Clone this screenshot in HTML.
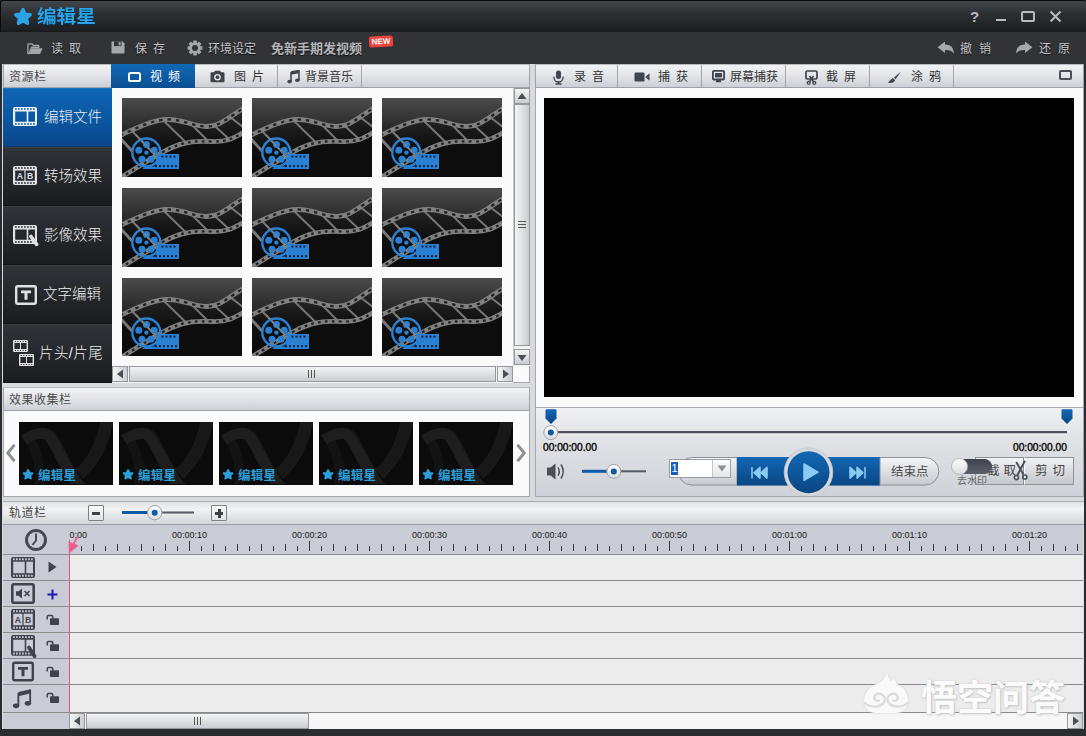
<!DOCTYPE html>
<html lang="zh-CN">
<head>
<meta charset="utf-8">
<title>编辑星</title>
<style>
*{box-sizing:border-box;margin:0;padding:0}
html,body{width:1086px;height:736px;overflow:hidden;background:#2b2d31}
body{font-family:"Liberation Sans","Noto Sans CJK SC",sans-serif;font-size:12px;color:#333;position:relative}
.abs{position:absolute}
i{font-style:normal}
#win{position:absolute;left:0;top:0;width:1086px;height:736px;background:#2a2c30;overflow:hidden}
#body{position:absolute;left:2px;top:64px;width:1082px;height:664.5px;background:#d9dadd}
#title{position:absolute;left:0;top:0;width:1086px;height:32px;background:linear-gradient(#43464b,#2e3034 40%,#1d1e21);border-bottom:1px solid #17181a;border-top:1px solid #0a0a0b;border-left:1px solid #0a0a0b;border-radius:3px 3px 0 0}
#title .name{position:absolute;left:36px;top:3px;font-size:18.5px;font-weight:bold;color:#2ba3e4;line-height:26px;transform:scaleX(1.06);transform-origin:0 0;text-shadow:0 1px 1px #0a2a4a}
#toolbar{position:absolute;left:0;top:32px;width:1086px;height:32px;background:#313337}
.tb{position:absolute;top:1px;height:32px;line-height:32px;color:#c4c6c9;font-size:12px;white-space:nowrap;text-shadow:0 1px 1px #111}
.panelhead{position:absolute;height:24px;background:linear-gradient(#f1f2f4,#e5e7ea 40%,#cdd0d6);border:1px solid #9fa2a8;border-top-color:#b8babf;font-size:12px;line-height:25px;color:#4a4a4a}
.tab{position:absolute;top:0;height:22px;line-height:25px;font-size:12px;color:#333;border-right:1px solid #a2a5ab;white-space:nowrap}
.tab.on{background:linear-gradient(#1168b6,#0b4f92);color:#fff;border-right:none;top:-1px;height:24px;line-height:27px}
.tab svg{position:absolute}
#side{position:absolute;left:3px;top:88px;width:108.5px;height:295px;background:#1b1c1f}
.si{position:absolute;left:0;width:108.5px;height:59px;background:linear-gradient(#303338,#25272b 50%,#1b1c1f);border-top:1px solid #3a3d42;border-bottom:1px solid #121315;color:#eceef0;font-size:14.5px;font-weight:300;line-height:57px;white-space:nowrap}
.si.on{background:linear-gradient(#0d65b4,#0b56a0 55%,#09468a);border-top-color:#1672c2;border-bottom-color:#083a70}
.si span{position:absolute;top:0}
.si svg{position:absolute}
.thumb{position:absolute;width:120px;height:79px}
.eth{position:absolute;width:94px;height:63px;top:11px;background:#0b0b0b;overflow:hidden}
.eth b{position:absolute;left:19px;top:46px;font-size:12.5px;color:#2a9fd8;font-weight:bold;line-height:16px;white-space:nowrap;letter-spacing:0.3px}
.eth svg{position:absolute;left:0;top:0}
.sbtn{position:absolute;width:16px;height:16px;background:linear-gradient(#f3f4f5,#dfe1e4 50%,#c9ccd1);border:1px solid #96989e}
.sbtnh{background:linear-gradient(90deg,#f3f4f5,#dfe1e4 50%,#c9ccd1)}
.track{position:absolute;left:3px;width:1080px;height:26px;background:#ececec;border-bottom:1px solid #8a8a8a}
.track u{position:absolute;left:0;top:0;width:66px;height:25px;background:#c9ccd4;text-decoration:none}
#ruler{position:absolute;left:3px;top:525px;width:1080px;height:30px;background:#c9ccd4;border-bottom:1px solid #8a8d94;overflow:hidden}
#ruler i{position:absolute;bottom:3px;width:1px;background:#33363c;margin-left:-3px}
#ruler span{position:absolute;top:4px;width:60px;text-align:center;font-size:9px;line-height:12px;color:#1a1a1a;margin-left:-3px}
.tm{position:absolute;font-size:10.2px;line-height:12px;color:#111;-webkit-text-stroke:0.5px #111;text-shadow:0 0 1px #fff,0 0 1px #fff,0 0 1px #fff;letter-spacing:0}
.btn2{position:absolute;top:457px;height:28px;border:1px solid #8d9097;background:linear-gradient(#f2f3f5,#d9dbe0 50%,#c4c7cd);font-size:12.5px;line-height:26px;color:#444;white-space:nowrap}
</style>
</head>
<body>
<svg width="0" height="0" style="position:absolute">
  <defs>
    <linearGradient id="tg" x1="0" y1="0" x2="0" y2="1">
      <stop offset="0" stop-color="#4b4b4b"/><stop offset="0.35" stop-color="#2c2c2c"/><stop offset="0.6" stop-color="#181818"/><stop offset="1" stop-color="#0c0c0c"/>
    </linearGradient>
    <linearGradient id="fg" x1="0" y1="0" x2="1" y2="1">
      <stop offset="0" stop-color="#000" stop-opacity="0.18"/><stop offset="1" stop-color="#000" stop-opacity="0.55"/>
    </linearGradient>
    <symbol id="thumb" viewBox="0 0 120 79">
      <rect width="120" height="79" fill="url(#tg)"/>
      <!-- below film: dark -->
      <path d="M-2 80 C 15 70, 35 56, 50 49.5 S 75 43, 90 43.5 S 112 40, 122 34 L122 80 Z" fill="#0d0d0d"/>
      <!-- film frames -->
      <path d="M-2 37.5 C 15 30, 30 22, 45 21.5 S 70 28, 84 28.5 S 108 18, 122 10 L122 34 C 112 40, 100 44, 90 43.5 S 65 43, 50 49.5 S 15 70, -2 80 Z" fill="url(#fg)"/>
      <!-- dividers -->
      <g stroke="#787878" stroke-width="1.9" fill="none">
        <path d="M10 33 L37 61"/><path d="M42.5 23.5 L63.5 44"/><path d="M70 27 L86 43"/><path d="M92.8 28 L107.5 41.5"/><path d="M108 19 L121 29"/><path d="M-1 41 L10 53" stroke-width="3"/>
      </g>
      <!-- bands -->
      <g fill="none" stroke="#808080" stroke-width="4.8">
        <path d="M-2 37.5 C 15 30, 30 22, 45 21.5 S 70 28, 84 28.5 S 108 18, 122 10"/>
        <path d="M-2 80 C 15 70, 35 56, 50 49.5 S 75 43, 90 43.5 S 112 40, 122 34"/>
      </g>
      <g fill="none" stroke="#222" stroke-width="2.2" stroke-dasharray="2.8 4.2">
        <path d="M-2 37.5 C 15 30, 30 22, 45 21.5 S 70 28, 84 28.5 S 108 18, 122 10" stroke-dasharray="3.4 5"/>
        <path d="M-2 80 C 15 70, 35 56, 50 49.5 S 75 43, 90 43.5 S 112 40, 122 34"/>
      </g>
      <!-- blue reel -->
      <g fill="#2a80d2">
        <circle cx="24.3" cy="54.5" r="14" fill="none" stroke="#2a80d2" stroke-width="2.4"/>
        <circle cx="24.5" cy="46.6" r="3.5"/><circle cx="16.8" cy="52.2" r="3.5"/><circle cx="32.2" cy="52.2" r="3.5"/><circle cx="20" cy="61.2" r="3.5"/><circle cx="29" cy="61.2" r="3.5"/><circle cx="24.4" cy="54.6" r="2.2"/>
        <path d="M34 56 H57 V71 H20 L24 68.5 H34 Z"/>
      </g>
      <g fill="#0a1a3a">
        <rect x="39.5" y="57.6" width="1.9" height="1.9"/><rect x="43.5" y="57.6" width="1.9" height="1.9"/><rect x="47.5" y="57.6" width="1.9" height="1.9"/><rect x="51.5" y="57.6" width="1.9" height="1.9"/>
        <rect x="33" y="67.2" width="1.9" height="1.9"/><rect x="37" y="67.2" width="1.9" height="1.9"/><rect x="41" y="67.2" width="1.9" height="1.9"/><rect x="45" y="67.2" width="1.9" height="1.9"/><rect x="49" y="67.2" width="1.9" height="1.9"/><rect x="53" y="67.2" width="1.9" height="1.9"/>
      </g>
      <!-- divider over reel -->
      <path d="M14 37 L35 59" stroke="#8a8a8a" stroke-width="1.8" stroke-opacity="0.75" stroke-dasharray="2.6 1.6"/>
    </symbol>
    <symbol id="eth" viewBox="0 0 94 62">
      <g fill="none" stroke="#1e1e1e" stroke-width="11" stroke-linecap="butt">
        <path d="M5 18 C 18 10, 26 10, 30 14 C 40 26, 48 52, 62 66" />
        <path d="M88 -4 C 84 20, 76 38, 60 52" stroke="#181818" stroke-width="12"/>
        <path d="M12 20 C 20 34, 22 50, 20 66" stroke="#131313" stroke-width="10"/>
      </g>
      <g fill="none" stroke="#343434" stroke-width="0.8" stroke-dasharray="1 1.2">
        <path d="M34 8.5 C 46 24, 52 48, 68 64" /><path d="M94 -2 C 90 20, 82 40, 64 56"/>
      </g>
      <g transform="translate(3.1,46.6) scale(0.6)"><path d="M10 2.6 L12.1 7.3 L17.2 7.8 L13.4 11.3 L14.5 16.3 L10 13.7 L5.5 16.3 L6.6 11.3 L2.8 7.8 L7.9 7.3 Z" fill="#2a9fd8" stroke="#2a9fd8" stroke-width="3.4" stroke-linejoin="round"/></g>
    </symbol>
    <!-- film icon 24x19 -->
    <symbol id="film" viewBox="0 0 24 19"><path fill-rule="evenodd" fill="currentColor" d="M2 0 H22 Q24 0 24 2 V17 Q24 19 22 19 H2 Q0 19 0 17 V2 Q0 0 2 0 ZM2.05 1.15 h1.70 v1.70 h-1.70 ZM2.05 16.15 h1.70 v1.70 h-1.70 ZM5.05 1.15 h1.70 v1.70 h-1.70 ZM5.05 16.15 h1.70 v1.70 h-1.70 ZM8.05 1.15 h1.70 v1.70 h-1.70 ZM8.05 16.15 h1.70 v1.70 h-1.70 ZM11.05 1.15 h1.70 v1.70 h-1.70 ZM11.05 16.15 h1.70 v1.70 h-1.70 ZM14.05 1.15 h1.70 v1.70 h-1.70 ZM14.05 16.15 h1.70 v1.70 h-1.70 ZM17.05 1.15 h1.70 v1.70 h-1.70 ZM17.05 16.15 h1.70 v1.70 h-1.70 ZM20.05 1.15 h1.70 v1.70 h-1.70 ZM20.05 16.15 h1.70 v1.70 h-1.70 ZM2.20 4.40 h11.50 v10.40 h-11.50 ZM15.30 4.40 h6.70 v10.40 h-6.70 Z"/></symbol>
    <symbol id="filmab" viewBox="0 0 24 19"><path fill-rule="evenodd" fill="currentColor" d="M2 0 H22 Q24 0 24 2 V17 Q24 19 22 19 H2 Q0 19 0 17 V2 Q0 0 2 0 ZM2.05 1.15 h1.70 v1.70 h-1.70 ZM2.05 16.15 h1.70 v1.70 h-1.70 ZM5.05 1.15 h1.70 v1.70 h-1.70 ZM5.05 16.15 h1.70 v1.70 h-1.70 ZM8.05 1.15 h1.70 v1.70 h-1.70 ZM8.05 16.15 h1.70 v1.70 h-1.70 ZM11.05 1.15 h1.70 v1.70 h-1.70 ZM11.05 16.15 h1.70 v1.70 h-1.70 ZM14.05 1.15 h1.70 v1.70 h-1.70 ZM14.05 16.15 h1.70 v1.70 h-1.70 ZM17.05 1.15 h1.70 v1.70 h-1.70 ZM17.05 16.15 h1.70 v1.70 h-1.70 ZM20.05 1.15 h1.70 v1.70 h-1.70 ZM20.05 16.15 h1.70 v1.70 h-1.70 ZM2.20 4.40 h9.20 v10.40 h-9.20 ZM12.60 4.40 h9.20 v10.40 h-9.20 Z"/><text x="6.8" y="12.9" font-family="Liberation Sans, sans-serif" font-size="8.6" font-weight="bold" fill="currentColor" text-anchor="middle">A</text><text x="17.2" y="12.9" font-family="Liberation Sans, sans-serif" font-size="8.6" font-weight="bold" fill="currentColor" text-anchor="middle">B</text></symbol>
    <symbol id="filmfx" viewBox="0 0 26 22"><path fill-rule="evenodd" fill="currentColor" d="M2 0 H22 Q24 0 24 2 V17 Q24 19 22 19 H2 Q0 19 0 17 V2 Q0 0 2 0 ZM2.05 1.15 h1.70 v1.70 h-1.70 ZM2.05 16.15 h1.70 v1.70 h-1.70 ZM5.05 1.15 h1.70 v1.70 h-1.70 ZM5.05 16.15 h1.70 v1.70 h-1.70 ZM8.05 1.15 h1.70 v1.70 h-1.70 ZM8.05 16.15 h1.70 v1.70 h-1.70 ZM11.05 1.15 h1.70 v1.70 h-1.70 ZM11.05 16.15 h1.70 v1.70 h-1.70 ZM14.05 1.15 h1.70 v1.70 h-1.70 ZM14.05 16.15 h1.70 v1.70 h-1.70 ZM17.05 1.15 h1.70 v1.70 h-1.70 ZM17.05 16.15 h1.70 v1.70 h-1.70 ZM20.05 1.15 h1.70 v1.70 h-1.70 ZM20.05 16.15 h1.70 v1.70 h-1.70 ZM2.20 4.40 h11.50 v10.40 h-11.50 ZM15.30 4.40 h6.70 v10.40 h-6.70 Z"/><path d="M18 11.5 L23.6 19.4" stroke="currentColor" stroke-width="3.6" stroke-linecap="round"/></symbol>
    <symbol id="ticon" viewBox="0 0 22 20">
      <rect x="1.2" y="1.2" width="19.6" height="17.6" rx="1.5" fill="none" stroke="currentColor" stroke-width="2.4"/>
      <path d="M6 5.5 H16 V8.3 H12.5 V14.8 H9.5 V8.3 H6 Z" fill="currentColor"/>
    </symbol>
    <symbol id="fsm" viewBox="0 0 15 12"><path fill-rule="evenodd" fill="currentColor" d="M1 0 H14 Q15 0 15 1 V11 Q15 12 14 12 H1 Q0 12 0 11 V1 Q0 0 1 0 ZM1.75 0.90 h1.10 v1.10 h-1.10 ZM1.75 10.00 h1.10 v1.10 h-1.10 ZM4.35 0.90 h1.10 v1.10 h-1.10 ZM4.35 10.00 h1.10 v1.10 h-1.10 ZM6.95 0.90 h1.10 v1.10 h-1.10 ZM6.95 10.00 h1.10 v1.10 h-1.10 ZM9.55 0.90 h1.10 v1.10 h-1.10 ZM9.55 10.00 h1.10 v1.10 h-1.10 ZM12.15 0.90 h1.10 v1.10 h-1.10 ZM12.15 10.00 h1.10 v1.10 h-1.10 ZM1.40 3.10 h5.60 v5.80 h-5.60 ZM8.00 3.10 h5.60 v5.80 h-5.60 Z"/></symbol>
    <symbol id="lock" viewBox="0 0 14 14">
      <rect x="4" y="5.2" width="9" height="6.8" rx="0.8" fill="currentColor"/>
      <path d="M1.2 6.4 V3.8 Q1.2 2.4 2.6 2.4 H5.4 Q6.8 2.4 6.8 3.8 V5.4" fill="none" stroke="currentColor" stroke-width="1.5"/>
    </symbol>
  </defs>
</svg>
<div id="win">
  <div id="title">
    <svg class="abs" style="left:12px;top:6px" width="20" height="19" viewBox="0 0 20 19"><path d="M10 2.6 L12.1 7.3 L17.2 7.8 L13.4 11.3 L14.5 16.3 L10 13.7 L5.5 16.3 L6.6 11.3 L2.8 7.8 L7.9 7.3 Z" fill="#2ba3e4" stroke="#2ba3e4" stroke-width="3.4" stroke-linejoin="round"/></svg>
    <div class="name">编辑星</div>
    <div class="abs" style="left:969px;top:7px;font-size:15px;line-height:18px;color:#b9bbbf;font-weight:bold">?</div>
    <div class="abs" style="left:995px;top:18px;width:10px;height:2px;background:#b9bbbf"></div>
    <div class="abs" style="left:1020px;top:10px;width:14px;height:11px;border:2px solid #b9bbbf;border-radius:2px"></div>
    <svg class="abs" style="left:1048px;top:9px" width="13" height="13" viewBox="0 0 13 13"><path d="M1.5 1.5 L11.5 11.5 M11.5 1.5 L1.5 11.5" stroke="#b9bbbf" stroke-width="2"/></svg>
  </div>
  <div id="toolbar">
    <svg class="abs" style="left:27px;top:10.5px" width="16.5" height="12" viewBox="0 0 18 13"><path d="M1 11.5 V2 Q1 1 2 1 H5.5 L7 2.6 H12 Q13 2.6 13 3.6 V4.6 H5 L2.4 11.5 Z" fill="none" stroke="#a4a7ab" stroke-width="1.4" stroke-linejoin="round"/><path d="M5.2 5.6 H17 L14.2 12 H2.6 Z" fill="#a4a7ab"/></svg>
    <div class="tb" style="left:51px;letter-spacing:6px">读取</div>
    <svg class="abs" style="left:111px;top:9px" width="14" height="13" viewBox="0 0 14 13"><path d="M1 0.5 H11.5 L13.5 2.5 V11.5 Q13.5 12.5 12.5 12.5 H1.5 Q0.5 12.5 0.5 11.5 V1 Q0.5 0.5 1 0.5 Z" fill="#a4a7ab"/><rect x="3" y="0.5" width="7.5" height="4.6" fill="#2f3136"/><rect x="7.6" y="1.2" width="2" height="3.2" fill="#a4a7ab"/></svg>
    <div class="tb" style="left:135px;letter-spacing:6px">保存</div>
    <svg class="abs" style="left:187px;top:8px" width="16" height="16" viewBox="-8 -8 16 16"><g fill="#a4a7ab"><circle r="5.7"/><g id="gt"><rect x="-1.8" y="-7.4" width="3.6" height="14.8" rx="0.6"/></g><use href="#gt" transform="rotate(45)"/><use href="#gt" transform="rotate(90)"/><use href="#gt" transform="rotate(135)"/></g><circle r="3" fill="#313337"/></svg>
    <div class="tb" style="left:208px">环境设定</div>
    <div class="tb" style="left:271px;font-weight:bold;font-size:13px;color:#b4b6b9">免新手期发视频</div>
    <div class="abs" style="left:369px;top:4px;width:24px;height:11px;background:#e8443c;border-radius:2px;color:#fff;font-size:8px;font-weight:bold;line-height:11px;text-align:center;transform:rotate(-3deg)">NEW</div>
    <svg class="abs" style="left:937px;top:9px" width="18" height="14" viewBox="0 0 18 14"><path d="M0.6 6.2 L8 0.4 V3.4 C13.5 3.4 16.8 6.6 16.8 12.4 C15 9.8 12.5 8.8 8 8.9 V12 Z" fill="#a4a7ab"/></svg>
    <div class="tb" style="left:960px;letter-spacing:7px">撤销</div>
    <svg class="abs" style="left:1015px;top:9px" width="18" height="14" viewBox="0 0 18 14"><path d="M17.4 6.2 L10 0.4 V3.4 C4.5 3.4 1.2 6.6 1.2 12.4 C3 9.8 5.5 8.8 10 8.9 V12 Z" fill="#a4a7ab"/></svg>
    <div class="tb" style="left:1039px;letter-spacing:7px">还原</div>
  </div>
  <div id="body"></div>

  <!-- left panel -->
  <div class="abs" style="left:3px;top:64px;width:527px;height:319px;background:#fafafa;border:1px solid #a4a7ad"></div>
  <div class="panelhead" style="left:3px;top:64px;width:527px;padding-left:5px"><span style="letter-spacing:0.5px">资源栏</span>
    <div class="tab on" style="left:107px;width:84px"><svg style="left:17px;top:8px" width="13" height="10" viewBox="0 0 13 10"><rect x="1" y="1" width="11" height="8" rx="1.6" fill="none" stroke="#fff" stroke-width="2"/></svg><span class="abs" style="left:39px;letter-spacing:6px">视频</span></div>
    <div class="tab" style="left:191px;width:83px"><svg style="left:15px;top:5px" width="15" height="13" viewBox="0 0 15 13"><path d="M0.5 3.3 Q0.5 2.3 1.5 2.3 H4 L5 0.7 H10 L11 2.3 H13.5 Q14.5 2.3 14.5 3.3 V11.3 Q14.5 12.3 13.5 12.3 H1.5 Q0.5 12.3 0.5 11.3 Z" fill="#40444c"/><circle cx="7.5" cy="7.2" r="3.3" fill="#e6e8eb"/><circle cx="7.5" cy="7.2" r="1.9" fill="#40444c"/></svg><span class="abs" style="left:39px;letter-spacing:6px">图片</span></div>
    <div class="tab" style="left:274px;width:84px"><svg style="left:9px;top:5px" width="13" height="14" viewBox="0 0 13 14"><path d="M4 2 L12 0.5 V10" fill="none" stroke="#40444c" stroke-width="1.6"/><path d="M4 2 V11.5" stroke="#40444c" stroke-width="1.6"/><path d="M4 2 L12 0.5 V3.2 L4 4.7 Z" fill="#40444c"/><ellipse cx="2.6" cy="11.6" rx="2.3" ry="1.8" fill="#40444c"/><ellipse cx="10.4" cy="10.2" rx="2.3" ry="1.8" fill="#40444c"/></svg><span class="abs" style="left:27px">背景音乐</span></div>
  </div>
  <div id="side">
    <div class="si on" style="top:0"><svg style="left:10px;top:18px;color:#e9f1f9" width="24" height="19"><use href="#film"/></svg><span style="left:41px">编辑文件</span></div>
    <div class="si" style="top:59px"><svg style="left:10px;top:18px;color:#dfe1e4" width="24" height="19"><use href="#filmab"/></svg><span style="left:41px">转场效果</span></div>
    <div class="si" style="top:118px"><svg style="left:10px;top:18px;color:#dfe1e4" width="26" height="22"><use href="#filmfx"/></svg><span style="left:41px">影像效果</span></div>
    <div class="si" style="top:177px"><svg style="left:12px;top:19px;color:#dfe1e4" width="22" height="20"><use href="#ticon"/></svg><span style="left:40px">文字编辑</span></div>
    <div class="si" style="top:236px"><svg style="left:10px;top:15px;color:#dfe1e4" width="15" height="12"><use href="#fsm"/></svg><svg style="left:16px;top:29px;color:#dfe1e4" width="15" height="12"><use href="#fsm"/></svg><span style="left:36px;letter-spacing:0.4px">片头/片尾</span></div>
  </div>
  <!-- thumbs -->
  <svg class="thumb" style="left:122px;top:98px"><use href="#thumb"/></svg>
  <svg class="thumb" style="left:252px;top:98px"><use href="#thumb"/></svg>
  <svg class="thumb" style="left:382px;top:98px"><use href="#thumb"/></svg>
  <svg class="thumb" style="left:122px;top:188px"><use href="#thumb"/></svg>
  <svg class="thumb" style="left:252px;top:188px"><use href="#thumb"/></svg>
  <svg class="thumb" style="left:382px;top:188px"><use href="#thumb"/></svg>
  <div class="abs" style="left:122px;top:278px;width:120px;height:77.7px;overflow:hidden"><svg class="thumb" style="left:0;top:0"><use href="#thumb"/></svg></div>
  <div class="abs" style="left:252px;top:278px;width:120px;height:77.7px;overflow:hidden"><svg class="thumb" style="left:0;top:0"><use href="#thumb"/></svg></div>
  <div class="abs" style="left:382px;top:278px;width:120px;height:77.7px;overflow:hidden"><svg class="thumb" style="left:0;top:0"><use href="#thumb"/></svg></div>
  <!-- v scrollbar -->
  <div class="abs" style="left:513px;top:88px;width:17px;height:278px;background:#f4f4f5;border-left:1px solid #c8cacd"></div>
  <div class="sbtn" style="left:514px;top:88px"><svg class="abs" style="left:2px;top:3px" width="10" height="8" viewBox="0 0 10 8"><path d="M5 1 L9.5 7 H0.5 Z" fill="#4a4e57"/></svg></div>
  <div class="sbtn sbtnh" style="left:514px;top:104px;height:242px"><div class="abs" style="left:3px;top:116px;width:8px;height:7px;border-top:1px solid #555;border-bottom:1px solid #555"><div class="abs" style="left:0;top:2px;width:8px;height:1px;background:#555"></div></div></div>
  <div class="sbtn" style="left:514px;top:349px"><svg class="abs" style="left:2px;top:4px" width="10" height="8" viewBox="0 0 10 8"><path d="M5 7 L9.5 1 H0.5 Z" fill="#4a4e57"/></svg></div>
  <!-- h scrollbar -->
  <div class="abs" style="left:112px;top:366px;width:401px;height:17px;background:#f4f4f5;border-top:1px solid #c8cacd"></div>
  <div class="sbtn sbtnh" style="left:112px;top:366px"><svg class="abs" style="left:3px;top:2px" width="8" height="10" viewBox="0 0 8 10"><path d="M1 5 L7 0.5 V9.5 Z" fill="#4a4e57"/></svg></div>
  <div class="sbtn" style="left:129px;top:366px;width:367px"><div class="abs" style="left:178px;top:3px;width:7px;height:8px;border-left:1px solid #555;border-right:1px solid #555"><div class="abs" style="left:2px;top:0;width:1px;height:8px;background:#555"></div></div></div>
  <div class="sbtn sbtnh" style="left:497px;top:366px"><svg class="abs" style="left:4px;top:2px" width="8" height="10" viewBox="0 0 8 10"><path d="M7 5 L1 0.5 V9.5 Z" fill="#4a4e57"/></svg></div>

  <!-- effects panel -->
  <div class="abs" style="left:3px;top:387px;width:527px;height:110px;background:#fafafa;border:1px solid #a4a7ad"></div>
  <div class="panelhead" style="left:3px;top:387px;width:527px;padding-left:5px"><span style="letter-spacing:0.5px">效果收集栏</span></div>
  <div class="abs" id="eff" style="left:3px;top:411px;width:527px;height:85px">
    <svg class="abs" style="left:2px;top:33px" width="12" height="18" viewBox="0 0 12 18"><path d="M9.5 0.8 L2.8 9 L9.5 17.2" fill="none" stroke="#8e9197" stroke-width="3"/></svg>
    <div class="eth" style="left:16px"><svg width="94" height="62"><use href="#eth"/></svg><b>编辑星</b></div>
    <div class="eth" style="left:116px"><svg width="94" height="62"><use href="#eth"/></svg><b>编辑星</b></div>
    <div class="eth" style="left:216px"><svg width="94" height="62"><use href="#eth"/></svg><b>编辑星</b></div>
    <div class="eth" style="left:316px"><svg width="94" height="62"><use href="#eth"/></svg><b>编辑星</b></div>
    <div class="eth" style="left:416px"><svg width="94" height="62"><use href="#eth"/></svg><b>编辑星</b></div>
    <svg class="abs" style="left:512px;top:33px" width="12" height="18" viewBox="0 0 12 18"><path d="M2.5 0.8 L9.2 9 L2.5 17.2" fill="none" stroke="#8e9197" stroke-width="3"/></svg>
  </div>

  <!-- right panel -->
  <div class="abs" style="left:535px;top:64px;width:549px;height:433px;background:#fafafa;border:1px solid #a4a7ad"></div>
  <div class="abs" style="left:536px;top:407px;width:547px;height:89px;background:linear-gradient(#eff0f2,#dfe1e5 40%,#cfd2d8);border-top:1px solid #a9acb2"></div>
  <div class="panelhead" style="left:535px;top:64px;width:549px">
    <div class="tab" style="left:-1px;width:83px"><svg style="left:18px;top:5px" width="11" height="15" viewBox="0 0 11 15"><rect x="3" y="0.5" width="5" height="8.5" rx="2.5" fill="#40444c"/><path d="M1 6.5 V7.5 A4.5 4.5 0 0 0 10 7.5 V6.5 M5.5 12 V14 M2.5 14 H8.5" fill="none" stroke="#40444c" stroke-width="1.3"/></svg><span class="abs" style="left:39px;letter-spacing:6px">录音</span></div>
    <div class="tab" style="left:82px;width:84px"><svg style="left:16px;top:7px" width="16" height="10" viewBox="0 0 16 10"><rect x="0.5" y="0.5" width="10" height="9" rx="1.2" fill="#40444c"/><path d="M11.3 5 L15.5 1.2 V8.8 Z" fill="#40444c"/></svg><span class="abs" style="left:40px;letter-spacing:6px">捕获</span></div>
    <div class="tab" style="left:166px;width:84px"><svg style="left:10px;top:5px" width="13" height="13" viewBox="0 0 13 13"><rect x="0.9" y="0.9" width="11.2" height="8.6" rx="1" fill="none" stroke="#40444c" stroke-width="1.8"/><rect x="3" y="3" width="7" height="4.4" fill="#40444c"/><path d="M4.8 9.5 H8.2 L9.4 12.2 H3.6 Z" fill="#40444c"/></svg><span class="abs" style="left:28px">屏幕捕获</span></div>
    <div class="tab" style="left:250px;width:84px"><svg style="left:19px;top:5px" width="14" height="15" viewBox="0 0 14 15"><rect x="1" y="1" width="11" height="8" rx="1.3" fill="none" stroke="#40444c" stroke-width="1.7"/><path d="M4.5 6 L9 12.5 M8.5 6 L4 12.5" stroke="#40444c" stroke-width="1.4"/><circle cx="3.7" cy="12.8" r="1.5" fill="none" stroke="#40444c" stroke-width="1.2"/><circle cx="9.3" cy="12.8" r="1.5" fill="none" stroke="#40444c" stroke-width="1.2"/></svg><span class="abs" style="left:40px;letter-spacing:6px">截屏</span></div>
    <div class="tab" style="left:334px;width:84px"><svg style="left:17px;top:6px" width="15" height="13" viewBox="0 0 15 13"><path d="M14 0.5 L7 6.5 L8.6 8.2 Z" fill="#40444c"/><path d="M6.2 7.2 C4 7.2 3.6 9.5 0.8 11.6 C4 12.6 8 11.5 8 9 Z" fill="#40444c"/></svg><span class="abs" style="left:41px;letter-spacing:6px">涂鸦</span></div>
    <div class="abs" style="left:523px;top:5px;width:13px;height:10px;border:2px solid #4a4e57;border-radius:2px"></div>
  </div>
  <div class="abs" style="left:544px;top:98px;width:530px;height:299px;background:#000"></div>

  <!-- player controls -->
  <svg class="abs" style="left:536px;top:408px" width="547" height="88" viewBox="536 408 547 88">
    <defs>
      <linearGradient id="bl" x1="0" y1="0" x2="0" y2="1"><stop offset="0" stop-color="#1267b3"/><stop offset="1" stop-color="#0a4684"/></linearGradient>
      <linearGradient id="kn" x1="0" y1="0" x2="0" y2="1"><stop offset="0" stop-color="#ffffff"/><stop offset="1" stop-color="#d8dade"/></linearGradient>
      <linearGradient id="pl" x1="0" y1="0" x2="0" y2="1"><stop offset="0" stop-color="#f4f5f6"/><stop offset="0.5" stop-color="#dddfe3"/><stop offset="1" stop-color="#c6c9cf"/></linearGradient>
    </defs>
    <!-- markers -->
    <path d="M545.5 410.5 Q545.5 409.3 546.7 409.3 H555.3 Q556.5 409.3 556.5 410.5 V418.5 L551 424 L545.5 418.5 Z" fill="url(#bl)"/>
    <path d="M1061.5 410.5 Q1061.5 409.3 1062.7 409.3 H1071.3 Q1072.5 409.3 1072.5 410.5 V418.5 L1067 424 L1061.5 418.5 Z" fill="url(#bl)"/>
    <!-- seek track -->
    <rect x="549" y="431" width="518" height="2.6" fill="#4d525f"/>
    <rect x="549" y="433.5" width="518" height="1" fill="#f6f6f7"/>
    <circle cx="550.8" cy="432.6" r="7" fill="url(#kn)" stroke="#9fa2a9" stroke-width="1"/>
    <circle cx="550.8" cy="432.6" r="3" fill="#0d5ba5"/>
    <!-- volume -->
    <path d="M547 467.5 H550.5 L555.5 463.5 V479.5 L550.5 475.5 H547 Z" fill="#4a4e57"/>
    <path d="M558 467.3 Q560.5 471.5 558 475.7" fill="none" stroke="#4a4e57" stroke-width="1.5"/>
    <path d="M561 464.5 Q565.5 471.5 561 478.5" fill="none" stroke="#4a4e57" stroke-width="1.5"/>
    <rect x="582" y="469.8" width="32" height="3" fill="#0d5ba5"/>
    <rect x="614" y="470.3" width="32" height="2" fill="#545966"/>
    <circle cx="613.8" cy="471.4" r="7" fill="url(#kn)" stroke="#9fa2a9" stroke-width="1"/>
    <circle cx="613.8" cy="471.4" r="3" fill="#0d5ba5"/>
    <!-- start pill -->
    <path d="M737 457.5 H692 A13.8 13.8 0 0 0 692 485.1 H737 Z" fill="url(#pl)" stroke="#8d9097" stroke-width="1"/>
    <!-- prev / next blue -->
    <rect x="737" y="457" width="143" height="28.6" fill="url(#bl)"/>
    <path d="M752 467 V478.4 M767 467.3 L761 472.7 L767 478.1 Z M760 467.3 L754 472.7 L760 478.1 Z" fill="#8ccbf6" stroke="#8ccbf6" stroke-width="1.5" stroke-linejoin="round"/>
    <path d="M865 467 V478.4 M850 467.3 L856 472.7 L850 478.1 Z M857 467.3 L863 472.7 L857 478.1 Z" fill="#8ccbf6" stroke="#8ccbf6" stroke-width="1.5" stroke-linejoin="round"/>
    <!-- play -->
    <circle cx="808.5" cy="472.2" r="24.3" fill="#d5d8dd"/>
    <circle cx="808.5" cy="472.2" r="24.3" fill="none" stroke="#c2c5cb" stroke-width="0.8"/>
    <circle cx="808.5" cy="472.2" r="21" fill="url(#bl)"/>
    <path d="M804 464 L818 472.2 L804 480.4 Z" fill="#8ccbf6" stroke="#8ccbf6" stroke-width="1.5" stroke-linejoin="round"/>
    <!-- end pill -->
    <path d="M880 457.5 H925 A13.8 13.8 0 0 1 925 485.1 H880 Z" fill="url(#pl)" stroke="#8d9097" stroke-width="1"/>
    <text x="891" y="476" font-size="12.5" fill="#4a4a4a" font-family="Liberation Sans, Noto Sans CJK SC, sans-serif">结束点</text>
  </svg>
  <div class="tm" style="left:543px;top:442px">00:00:00.00</div>
  <div class="tm" style="left:1013px;top:442px">00:00:00.00</div>
  <!-- combobox -->
  <div class="abs" style="left:669px;top:459px;width:62px;height:19px;background:#fff;border:1px solid #9a9da4">
    <div class="abs" style="left:1px;top:2px;width:7px;height:13px;background:#1764c0;color:#fff;font-size:11px;line-height:13px;text-align:center">1</div>
    <div class="abs" style="left:42px;top:0;width:18px;height:17px;background:linear-gradient(#fdfdfd,#e4e5e8);border-left:1px solid #c4c6ca"><svg class="abs" style="left:4px;top:5px" width="10" height="7" viewBox="0 0 10 7"><path d="M0.5 0.5 H9.5 L5 6.5 Z" fill="#8b8e95"/></svg></div>
  </div>
  <!-- cut buttons -->
  <div class="btn2" style="left:975px;width:49px;border-right:none"><span class="abs" style="left:11px;letter-spacing:4px">截取</span></div>
  <div class="btn2" style="left:1024px;width:50px;border-left:1px solid #fafafa"><span class="abs" style="left:10px;letter-spacing:5px">剪切</span></div>
  <div class="abs" style="left:1023px;top:457px;width:1px;height:28px;background:#8d9097"></div>
  <!-- toggle -->
  <div class="abs" style="left:953px;top:459px;width:39px;height:15px;border-radius:8px;background:linear-gradient(#3f434d,#5b606b)"></div>
  <div class="abs" style="left:951px;top:458px;width:17px;height:17px;border-radius:9px;background:linear-gradient(#ffffff,#dcdde0);border:1px solid #b6b8bd"></div>
  <div class="abs" style="left:957px;top:475px;font-size:10px;line-height:12px;color:#666;white-space:nowrap">去水印</div>
  <svg class="abs" style="left:1013px;top:460px" width="16" height="22" viewBox="0 0 16 22"><path d="M12 0.8 L4.2 15.5 M3.2 2 L10.8 15" stroke="#4a4e57" stroke-width="1.9" fill="none"/><circle cx="3.4" cy="17.6" r="2.1" fill="none" stroke="#4a4e57" stroke-width="1.5"/><circle cx="11.8" cy="17" r="2.1" fill="none" stroke="#4a4e57" stroke-width="1.5"/></svg>

  <!-- timeline -->
  <div class="abs" style="left:3px;top:501px;width:1081px;height:24px;background:linear-gradient(#e2e4e7,#f1f2f3 35%,#d3d5d9);border-top:1px solid #a9acb2;border-bottom:1px solid #9a9da4;font-size:12px;line-height:22px;padding-left:6px;color:#4a4a4a;letter-spacing:0.5px">轨道栏</div>
  <div class="abs" style="left:88px;top:505px;width:16px;height:16px;border:1px solid #7e8188;border-radius:1px;background:linear-gradient(#fafafa,#e2e3e6)"><div class="abs" style="left:3px;top:6px;width:8px;height:3px;background:#3e4149"></div></div>
  <div class="abs" style="left:211px;top:505px;width:16px;height:16px;border:1px solid #7e8188;border-radius:1px;background:linear-gradient(#fafafa,#e2e3e6)"><div class="abs" style="left:3px;top:6px;width:8px;height:3px;background:#3e4149"></div><div class="abs" style="left:5.5px;top:3px;width:3px;height:9px;background:#3e4149"></div></div>
  <svg class="abs" style="left:120px;top:503px" width="80" height="20" viewBox="120 503 80 20">
    <rect x="122" y="511" width="33" height="3" fill="#0d5ba5"/><rect x="155" y="511.5" width="39" height="2" fill="#545966"/>
    <circle cx="154.7" cy="512.7" r="7.2" fill="url(#kn)" stroke="#9fa2a9" stroke-width="1"/><circle cx="154.7" cy="512.7" r="3" fill="#0d5ba5"/>
  </svg>
  <div id="ruler"><span style="left:66.5px;width:auto;margin-left:0;text-align:left">0:00</span><i style="left:81.0px;height:5px"></i><i style="left:93.0px;height:7px"></i><i style="left:105.0px;height:5px"></i><i style="left:117.0px;height:7px"></i><i style="left:129.0px;height:5px"></i><i style="left:141.0px;height:7px"></i><i style="left:153.0px;height:5px"></i><i style="left:165.0px;height:7px"></i><i style="left:177.0px;height:5px"></i><i style="left:189.0px;height:10px"></i><i style="left:201.0px;height:5px"></i><i style="left:213.0px;height:7px"></i><i style="left:225.0px;height:5px"></i><i style="left:237.0px;height:7px"></i><i style="left:249.0px;height:5px"></i><i style="left:261.0px;height:7px"></i><i style="left:273.0px;height:5px"></i><i style="left:285.0px;height:7px"></i><i style="left:297.0px;height:5px"></i><i style="left:309.0px;height:10px"></i><i style="left:321.0px;height:5px"></i><i style="left:333.0px;height:7px"></i><i style="left:345.0px;height:5px"></i><i style="left:357.0px;height:7px"></i><i style="left:369.0px;height:5px"></i><i style="left:381.0px;height:7px"></i><i style="left:393.0px;height:5px"></i><i style="left:405.0px;height:7px"></i><i style="left:417.0px;height:5px"></i><i style="left:429.0px;height:10px"></i><i style="left:441.0px;height:5px"></i><i style="left:453.0px;height:7px"></i><i style="left:465.0px;height:5px"></i><i style="left:477.0px;height:7px"></i><i style="left:489.0px;height:5px"></i><i style="left:501.0px;height:7px"></i><i style="left:513.0px;height:5px"></i><i style="left:525.0px;height:7px"></i><i style="left:537.0px;height:5px"></i><i style="left:549.0px;height:10px"></i><i style="left:561.0px;height:5px"></i><i style="left:573.0px;height:7px"></i><i style="left:585.0px;height:5px"></i><i style="left:597.0px;height:7px"></i><i style="left:609.0px;height:5px"></i><i style="left:621.0px;height:7px"></i><i style="left:633.0px;height:5px"></i><i style="left:645.0px;height:7px"></i><i style="left:657.0px;height:5px"></i><i style="left:669.0px;height:10px"></i><i style="left:681.0px;height:5px"></i><i style="left:693.0px;height:7px"></i><i style="left:705.0px;height:5px"></i><i style="left:717.0px;height:7px"></i><i style="left:729.0px;height:5px"></i><i style="left:741.0px;height:7px"></i><i style="left:753.0px;height:5px"></i><i style="left:765.0px;height:7px"></i><i style="left:777.0px;height:5px"></i><i style="left:789.0px;height:10px"></i><i style="left:801.0px;height:5px"></i><i style="left:813.0px;height:7px"></i><i style="left:825.0px;height:5px"></i><i style="left:837.0px;height:7px"></i><i style="left:849.0px;height:5px"></i><i style="left:861.0px;height:7px"></i><i style="left:873.0px;height:5px"></i><i style="left:885.0px;height:7px"></i><i style="left:897.0px;height:5px"></i><i style="left:909.0px;height:10px"></i><i style="left:921.0px;height:5px"></i><i style="left:933.0px;height:7px"></i><i style="left:945.0px;height:5px"></i><i style="left:957.0px;height:7px"></i><i style="left:969.0px;height:5px"></i><i style="left:981.0px;height:7px"></i><i style="left:993.0px;height:5px"></i><i style="left:1005.0px;height:7px"></i><i style="left:1017.0px;height:5px"></i><i style="left:1029.0px;height:10px"></i><i style="left:1041.0px;height:5px"></i><i style="left:1053.0px;height:7px"></i><i style="left:1065.0px;height:5px"></i><i style="left:1077.0px;height:7px"></i><span style="left:159.5px">00:00:10</span><span style="left:279.5px">00:00:20</span><span style="left:399.5px">00:00:30</span><span style="left:519.5px">00:00:40</span><span style="left:639.5px">00:00:50</span><span style="left:759.5px">00:01:00</span><span style="left:879.5px">00:01:10</span><span style="left:999.5px">00:01:20</span></div>
  <div class="track" style="top:555px;height:26px"><u></u><svg class="abs" style="left:8px;top:2px;color:#40434b" width="24" height="21" viewBox="0 0 24 19" preserveAspectRatio="none"><use href="#film"/></svg><svg class="abs" style="left:45px;top:6px" width="9" height="12" viewBox="0 0 9 12"><path d="M0.5 0.5 L8.5 6 L0.5 11.5 Z" fill="#40434b"/></svg></div>
  <div class="track" style="top:581px"><u></u><svg class="abs" style="left:8px;top:2px" width="24" height="21" viewBox="0 0 24 21"><rect x="1.3" y="1.3" width="21.4" height="18.4" rx="1.8" fill="none" stroke="#40434b" stroke-width="2.6"/><path d="M5 8.3 H7.5 L11 5.5 V15.5 L7.5 12.7 H5 Z" fill="#40434b"/><path d="M13.5 8 L18.5 13 M18.5 8 L13.5 13" stroke="#40434b" stroke-width="1.5"/></svg><svg class="abs" style="left:44px;top:8px" width="11" height="11" viewBox="0 0 11 11"><path d="M5.5 0.5 V10.5 M0.5 5.5 H10.5" stroke="#1a1ab4" stroke-width="2"/></svg></div>
  <div class="track" style="top:607px"><u></u><svg class="abs" style="left:8px;top:2px;color:#40434b" width="24" height="21" viewBox="0 0 24 19" preserveAspectRatio="none"><use href="#filmab"/></svg><svg class="abs" style="left:43px;top:6px;color:#40434b" width="14" height="14"><use href="#lock"/></svg></div>
  <div class="track" style="top:633px"><u></u><svg class="abs" style="left:8px;top:2px;color:#40434b" width="26" height="24" viewBox="0 0 26 22" preserveAspectRatio="none"><use href="#filmfx"/></svg><svg class="abs" style="left:43px;top:6px;color:#40434b" width="14" height="14"><use href="#lock"/></svg></div>
  <div class="track" style="top:659px"><u></u><svg class="abs" style="left:9px;top:2px;color:#40434b" width="22" height="21"><use href="#ticon"/></svg><svg class="abs" style="left:43px;top:6px;color:#40434b" width="14" height="14"><use href="#lock"/></svg></div>
  <div class="track" style="top:685px;height:28px"><u style="height:27px"></u><svg class="abs" style="left:9px;top:3px" width="20" height="21" viewBox="0 0 22 22"><path d="M7 5 L20 2 V16" fill="none" stroke="#40434b" stroke-width="2"/><path d="M7 5 V19" stroke="#40434b" stroke-width="2"/><path d="M7 4 L20 1 V5.5 L7 8.5 Z" fill="#40434b"/><ellipse cx="4.5" cy="19" rx="3.5" ry="2.6" fill="#40434b"/><ellipse cx="17.5" cy="16.3" rx="3.5" ry="2.6" fill="#40434b"/></svg><svg class="abs" style="left:43px;top:6px;color:#40434b" width="14" height="14"><use href="#lock"/></svg></div>
  <!-- clock -->
  <svg class="abs" style="left:24px;top:528px" width="24" height="24" viewBox="0 0 24 24"><circle cx="12" cy="12" r="9.5" fill="none" stroke="#474a52" stroke-width="3"/><path d="M12 5.5 V12.5 L8.5 17" fill="none" stroke="#474a52" stroke-width="2"/></svg>
  <!-- bottom scrollbar -->
  <div class="abs" style="left:3px;top:713px;width:66px;height:15.5px;background:#c9ccd4"></div>
  <div class="abs" style="left:69px;top:713px;width:1014px;height:15.5px;background:#f6f6f6"></div>
  <div class="sbtn sbtnh" style="left:69px;top:712.5px"><svg class="abs" style="left:3px;top:2px" width="8" height="10" viewBox="0 0 8 10"><path d="M1 5 L7 0.5 V9.5 Z" fill="#4a4e57"/></svg></div>
  <div class="sbtn" style="left:86px;top:712.5px;width:223px"><div class="abs" style="left:107px;top:3px;width:7px;height:8px;border-left:1px solid #555;border-right:1px solid #555"><div class="abs" style="left:2px;top:0;width:1px;height:8px;background:#555"></div></div></div>
  <div class="sbtn sbtnh" style="left:1067px;top:712.5px"><svg class="abs" style="left:4px;top:2px" width="8" height="10" viewBox="0 0 8 10"><path d="M7 5 L1 0.5 V9.5 Z" fill="#4a4e57"/></svg></div>
  <!-- playhead -->
  <div class="abs" style="left:68.5px;top:540px;width:1.5px;height:173px;background:#e2517f"></div>
  <svg class="abs" style="left:68px;top:536px" width="14" height="18" viewBox="0 0 14 18"><path d="M0.5 5.5 L10.5 9.5 L1 17.5 Z" fill="#ef5b8c"/><path d="M9.5 1 L5 9" stroke="#ef5b8c" stroke-width="1.6"/></svg>
  <!-- watermark -->
  <div class="abs" style="left:921px;top:674.5px;font-size:36px;line-height:48px;color:#fbfbfb;font-weight:700;letter-spacing:0;text-shadow:0 0 2px #c8c8c8,1px 1px 2px #c4c4c4;white-space:nowrap">悟空问答</div>
  <svg class="abs" style="left:862px;top:672px" width="48" height="46" viewBox="0 0 48 46"><path d="M24.7 1 C 23 6, 20 10, 15 12 C 6 15, 2 22, 2 29 C 2 37, 8 41, 14 41 H 34 C 40 41, 46 37, 46 29 C 46 22, 42 15, 35 12 C 34 10, 33 7, 31.5 5 C 31 7, 30 8.5, 29 9 C 27.5 7, 26 4, 24.7 1 Z" fill="#f9f9f9" style="filter:drop-shadow(0 0 1px #cfcfcf)"/><g fill="none" stroke="#dcdcdc" stroke-width="2.4" stroke-linecap="round"><path d="M3 31 C 8 36, 20 36, 22.5 29 C 24 23, 17 19.5, 13.5 23 C 11 26, 13.5 30, 17 28.5"/><path d="M45.2 31 C 40.2 36, 28.2 36, 25.7 29 C 24.2 23, 31.2 19.5, 34.7 23 C 37.2 26, 34.7 30, 31.2 28.5"/></g></svg>
</div>
</body>
</html>
